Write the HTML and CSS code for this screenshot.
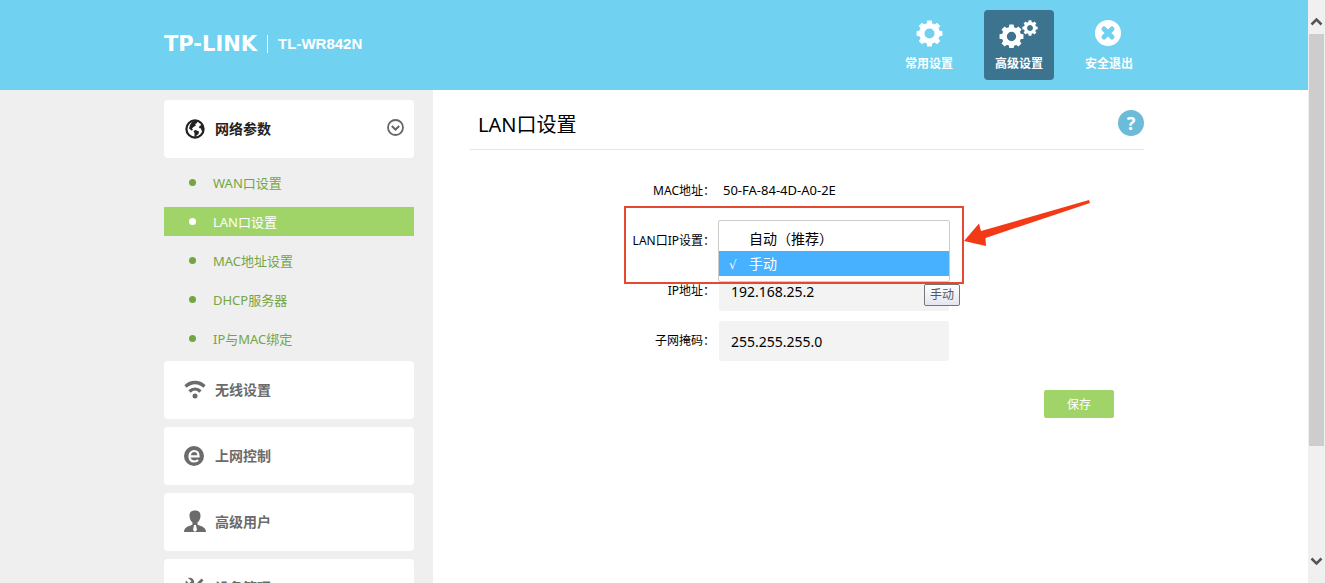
FILE: index.html
```html
<!DOCTYPE html>
<html lang="zh-CN">
<head>
    <meta charset="UTF-8">
    <meta name="viewport" content="width=device-width, initial-scale=1.0">
    <title>TL-WR842N</title>
    <link rel="stylesheet" href="styles.css">
</head>
<body>
    <svg class="defs" width="0" height="0" aria-hidden="true">
        <defs>
            <symbol id="gear" viewBox="-14 -14 28 28">
                <circle r="8" fill="none" stroke="currentColor" stroke-width="5.6"/>
                <g fill="currentColor">
                    <path id="teeth" d="M-3-9.5L-2.4-13.4H2.4L3-9.5V-8H-3ZM-3 9.5L-2.4 13.4H2.4L3 9.5V8H-3Z"/>
                    <use href="#teeth" transform="rotate(45)"/>
                    <use href="#teeth" transform="rotate(90)"/>
                    <use href="#teeth" transform="rotate(135)"/>
                </g>
            </symbol>
        </defs>
    </svg>

    <div class="page">
        <header class="header">
            <div class="header-inner">
                <div class="brand">
                    <span class="logo">TP-LINK</span>
                    <span class="model">TL-WR842N</span>
                </div>
                <nav class="top-nav">
                    <a href="#" class="top-link">
                        <svg width="40" height="28" viewBox="0 0 40 28"><use href="#gear" x="7" y="0" width="27" height="27"/></svg>
                        <span>常用设置</span>
                    </a>
                    <a href="#" class="top-link active">
                        <svg width="40" height="28" viewBox="0 0 40 28">
                            <use href="#gear" x="0" y="4" width="25" height="25"/>
                            <use href="#gear" x="23" y="0" width="16" height="16"/>
                        </svg>
                        <span>高级设置</span>
                    </a>
                    <a href="#" class="top-link">
                        <svg width="40" height="28" viewBox="0 0 40 28">
                            <circle cx="19" cy="13" r="13" fill="#fff"/>
                            <path d="M15 9l8 8M23 9l-8 8" stroke="#70d1f0" stroke-width="5" stroke-linecap="round"/>
                        </svg>
                        <span>安全退出</span>
                    </a>
                </nav>
            </div>
        </header>

        <div class="main">
            <aside class="sidebar">
                <nav class="menu">
                    <a href="#" class="menu-card open">
                        <svg width="22" height="22" viewBox="0 0 22 22">
                            <circle cx="11" cy="12" r="8.6" fill="none" stroke="currentColor" stroke-width="2.200"/>
                            <path d="M8 5l3.500-1.500 2 1.500-1 1.500-1.500.5 1 1.500-2.500 1.500-1.500 1.500 1 1.500-1.500.5-2.500-2L6 8ZM9.500 14l2-1 3.500 1.500-.5 2.500-2 1.500-.5 2-1.500-1V16ZM15.500 9l3-1.500 1.500 4.500-1 2.500-1.500-1-.5-2-2-.5Z" fill="currentColor"/>
                        </svg>
                        <span>网络参数</span>
                        <svg class="chevron" width="18" height="18" viewBox="0 0 18 18">
                            <circle cx="8.500" cy="8.500" r="7.500" fill="none" stroke="currentColor" stroke-width="1.800"/>
                            <path d="M4.800 7l3.700 3.500L12.200 7" fill="none" stroke="currentColor" stroke-width="2"/>
                        </svg>
                    </a>
                    <ul class="submenu">
                        <li><a href="#">WAN口设置</a></li>
                        <li><a href="#" class="active">LAN口设置</a></li>
                        <li><a href="#">MAC地址设置</a></li>
                        <li><a href="#">DHCP服务器</a></li>
                        <li><a href="#">IP与MAC绑定</a></li>
                    </ul>
                    <a href="#" class="menu-card">
                        <svg width="22" height="22" viewBox="0 0 22 22">
                            <path d="M1.500 8.500c5.500-5.300 13.500-5.300 19 0M5.500 13.500c3.200-3.200 7.800-3.200 11 0" fill="none" stroke="currentColor" stroke-width="3.400"/>
                            <circle cx="11" cy="18" r="2.500" fill="currentColor"/>
                        </svg>
                        <span>无线设置</span>
                    </a>
                    <a href="#" class="menu-card">
                        <svg width="22" height="22" viewBox="0 0 22 22">
                            <circle cx="10" cy="12" r="10" fill="currentColor"/>
                            <path d="M5.500 12.300h9c0-3.300-1.800-5.300-4.300-5.300s-4.700 2.200-4.700 5.300 1.900 5.200 4.800 5.200c1.600 0 2.800-.5 3.800-1.500" fill="none" stroke="#fff" stroke-width="2.200"/>
                        </svg>
                        <span>上网控制</span>
                    </a>
                    <a href="#" class="menu-card">
                        <svg width="22" height="22" viewBox="0 0 22 22">
                            <path d="M11 .5c4 0 5.700 2.200 5.500 5.500-.1 3-1.500 5.500-3 6.500v2c1.500 1.500 8.500 1.500 8.500 7.500H0c0-6 7-6 8.500-7.500v-2C7 11.500 5.600 9 5.500 6 5.300 2.700 7 .5 11 .5Z" fill="currentColor"/>
                            <path d="M10 15h2l1 5-2 2-2-2Z" fill="#fff"/>
                        </svg>
                        <span>高级用户</span>
                    </a>
                    <a href="#" class="menu-card">
                        <svg width="22" height="22" viewBox="0 0 22 22">
                            <path d="M4 2c4-1 7 2 6 5.500l9 9-3 3-9-9C3.500 11.500.500 8.500 2 4.500l3 3 2.500-2.500Z" fill="currentColor"/>
                            <path d="M17.500 2.500l2 2-5 5-2-2ZM8 13l2 2-4.500 4.500-3-3Z" fill="currentColor"/>
                        </svg>
                        <span>设备管理</span>
                    </a>
                </nav>
            </aside>

            <main class="content">
                <div class="title-bar">
                    <h1>LAN口设置</h1>
                    <button type="button" class="help">?</button>
                </div>

                <form class="lan-form">
                    <div class="row">
                        <span class="label">MAC地址：</span>
                        <span class="value">50-FA-84-4D-A0-2E</span>
                    </div>
                    <div class="row">
                        <label class="label" for="ip-mode">LAN口IP设置：</label>
                        <div class="select-box">
                            <select id="ip-mode" size="2">
                                <option value="auto">自动（推荐）</option>
                                <option value="manual" selected>手动</option>
                            </select>
                            <span class="tooltip">手动</span>
                        </div>
                        <div class="highlight"></div>
                        <svg class="arrow" width="128" height="48" viewBox="0 0 128 48">
                            <path d="M0 41L15 23.500 17 31 125 0 126 3 21.500 38 22 46Z" fill="#f23a17"/>
                        </svg>
                    </div>
                    <div class="row">
                        <label class="label" for="ip">IP地址：</label>
                        <input type="text" id="ip" value="192.168.25.2">
                    </div>
                    <div class="row">
                        <label class="label" for="mask">子网掩码：</label>
                        <input type="text" id="mask" value="255.255.255.0">
                    </div>
                    <div class="actions">
                        <button type="submit" class="save">保存</button>
                    </div>
                </form>
            </main>
        </div>
    </div>

    <div class="scrollbar" aria-hidden="true">
        <svg width="13" height="9" viewBox="0 0 13 9"><path d="M1.500 7.500l5-5 5 5" fill="none" stroke="#555" stroke-width="2.500"/></svg>
        <div class="track"><div class="thumb"></div></div>
        <svg width="13" height="9" viewBox="0 0 13 9"><path d="M1.500 1.500l5 5 5-5" fill="none" stroke="#555" stroke-width="2.500"/></svg>
    </div>
</body>
</html>
```

FILE: styles.css
```css
:root {
    --blue: #70d1f0;
    --green: #a0d468;
    --green-text: #74a544;
    --grey: #efefef;
}

* {
    box-sizing: border-box;
    margin: 0;
    padding: 0;
}

body {
    display: flex;
    height: 100vh;
    overflow: hidden;
    background: #fff;
    color: #000;
    font-family: "Noto Sans", "Noto Sans CJK SC", sans-serif;
    font-size: 12px;
}

a {
    color: inherit;
    text-decoration: none;
}

input, select, button {
    font-family: inherit;
}

.defs {
    position: absolute;
}

.page {
    flex: 1;
    display: flex;
    flex-direction: column;
    min-width: 0;
    overflow: hidden;
}

/* header */
.header {
    flex: none;
    background: var(--blue);
    color: #fff;
}

.header-inner {
    display: flex;
    justify-content: space-between;
    align-items: center;
    max-width: 980px;
    height: 90px;
    margin: 0 auto;
}

.brand {
    display: flex;
    align-items: center;
    gap: 10px;
    padding-bottom: 2px;
    line-height: 18px;
}

.logo {
    font-family: "DejaVu Sans", sans-serif;
    font-size: 21px;
    font-weight: bold;
}

.model {
    padding-left: 10px;
    border-left: 1px solid #fff;
    font-family: "Liberation Sans", sans-serif;
    font-size: 15px;
    font-weight: bold;
}

.top-nav {
    display: flex;
    gap: 20px;
}

.top-link {
    display: flex;
    flex-direction: column;
    align-items: center;
    gap: 7px;
    width: 70px;
    height: 70px;
    padding-top: 10px;
    border-radius: 4px;
    font-weight: bold;
    line-height: 18px;
}

.top-link.active {
    background: #3c738f;
}

/* sidebar and content share the 980px column */
.main {
    flex: 1 0 auto;
    display: grid;
    grid-template-columns: 1fr 269px 711px 1fr;
}

.sidebar {
    grid-column: 1 / 3;
    display: flex;
    justify-content: flex-end;
    padding: 10px 19px 10px 0;
    background: var(--grey);
}

.menu {
    display: flex;
    flex-direction: column;
    gap: 8px;
    width: 250px;
}

.menu-card {
    display: flex;
    align-items: center;
    gap: 9px;
    height: 58px;
    padding: 0 9px 2px 20px;
    border-radius: 4px;
    background: #fff;
    color: #6b6b6b;
    font-size: 14px;
    font-weight: bold;
}

.menu-card.open {
    color: #222;
}

.chevron {
    margin-left: auto;
    color: #666;
}

.submenu {
    display: flex;
    flex-direction: column;
    gap: 10px;
    padding-top: 2px;
    list-style: none;
}

.submenu a {
    display: flex;
    align-items: center;
    gap: 17px;
    height: 29px;
    padding-left: 25px;
    color: var(--green-text);
    font-size: 13px;
}

.submenu a::before {
    content: "";
    width: 7px;
    height: 7px;
    border-radius: 50%;
    background: currentColor;
}

.submenu a.active {
    background: var(--green);
    color: #fff;
}

/* content */
.content {
    padding-left: 37px;
}

.title-bar {
    display: flex;
    align-items: center;
    justify-content: space-between;
    height: 60px;
    padding: 7px 0 0 8px;
    border-bottom: 1px solid #e5e5e5;
}

.title-bar h1 {
    font-size: 20px;
    font-weight: normal;
}

.help {
    width: 26px;
    height: 26px;
    border: 0;
    border-radius: 50%;
    background: #6cbbd9;
    color: #fff;
    font-size: 18px;
    font-weight: bold;
    line-height: 26px;
}

.lan-form {
    display: flex;
    flex-direction: column;
    gap: 10px;
    padding-top: 21px;
}

.row {
    position: relative;
    display: grid;
    grid-template-columns: 245px 230px;
    gap: 4px;
    align-items: center;
    height: 40px;
}

.label {
    padding-bottom: 2px;
    text-align: right;
}

.value {
    padding: 0 0 2px 4px;
    font-size: 13px;
}

.row input {
    width: 230px;
    height: 40px;
    padding: 0 12px;
    border: 0;
    border-radius: 2px;
    background: #f3f3f3;
    color: #000;
    font-size: 14px;
}

.select-box {
    position: relative;
    z-index: 1;
    height: 40px;
}

.select-box select {
    position: absolute;
    top: -1px;
    left: -1px;
    width: 232px;
    height: 62px;
    padding: 5px 0;
    border: 1px solid #ccc;
    border-radius: 2px;
    outline: none;
    background: #fff;
    font-size: 14px;
    overflow: hidden;
}

.select-box option {
    height: 25px;
    padding: 2px 0 0 10px;
    color: #000;
    line-height: 23px;
}

.select-box option::before {
    content: "";
    display: inline-block;
    width: 20px;
    font-family: "DejaVu Sans", sans-serif;
    font-size: 12px;
    line-height: 12px;
}

.select-box option:checked {
    background: #48b1ff linear-gradient(#48b1ff, #48b1ff);
    color: #fff;
}

.select-box option:checked::before {
    content: "√";
}

.tooltip {
    position: absolute;
    top: 63px;
    left: 205px;
    padding: 0 5px;
    border: 1px solid #767676;
    border-radius: 2px;
    background: linear-gradient(#fff, #e4e5f0);
    color: #575757;
    line-height: 20px;
    white-space: nowrap;
}

.highlight {
    position: absolute;
    z-index: 2;
    top: -15px;
    left: 154px;
    width: 340px;
    height: 78px;
    border: 2px solid #e5492f;
    pointer-events: none;
}

.arrow {
    position: absolute;
    top: -21px;
    left: 494px;
}

.actions {
    display: flex;
    justify-content: flex-end;
    padding: 19px 30px 0 0;
}

.save {
    width: 70px;
    height: 28px;
    border: 0;
    border-radius: 2px;
    background: var(--green);
    color: #fff;
    font-size: 12px;
}

/* window scrollbar */
.scrollbar {
    flex: none;
    display: flex;
    flex-direction: column;
    align-items: center;
    gap: 8px;
    width: 17px;
    padding: 17px 0;
    background: #f0f0f0;
}

.track {
    flex: 1;
    width: 15px;
}

.thumb {
    height: 80%;
    background: #cdcdcd;
}
```
